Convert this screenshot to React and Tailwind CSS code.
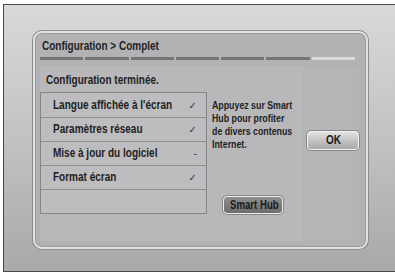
import React from 'react';

const rows = [
  { label: "Langue affichée à l'écran", mark: '✓' },
  { label: 'Paramètres réseau', mark: '✓' },
  { label: 'Mise à jour du logiciel', mark: '-' },
  { label: 'Format écran', mark: '✓' },
  { label: '', mark: '' },
];

const segments = [1, 1, 1, 1, 1, 1, 0];

// condensed look: Liberation Sans squeezed horizontally
function N({ children, center }) {
  return (
    <span
      className={`inline-block whitespace-nowrap scale-x-[0.8] ${center ? 'origin-center' : 'origin-left'}`}
    >
      {children}
    </span>
  );
}

function App() {
  return (
    <div
      className="w-[395px] h-[273px] bg-white pt-[4px] pl-[3px] overflow-hidden text-[#1e1e1e]"
      style={{ fontFamily: '"Liberation Sans", Arial, sans-serif' }}
    >
      <div className="w-[392px] h-[268px] border-t border-l border-b border-[#4a4a4a] bg-gradient-to-b from-[#d9d9d9] via-[#c2c2c2] to-[#a9a9aa] pt-[26px] pl-[29px]">
        {/* Dialog */}
        <div className="w-[335px] h-[218px] rounded-[9px] border-2 border-[#e2e2e2] bg-[#b2b2b4] shadow-[0_0_0_1px_#8d8d8f,inset_0_0_0_1px_#9a9a9c] pl-[5px] pr-[11px] flex flex-col">
          <div className="h-[22px] pt-[6px] pl-[2px] text-[12.5px] font-bold leading-[14px] text-[#222]">
            <N>Configuration &gt; Complet</N>
          </div>

          {/* Step bar */}
          <div className="flex gap-[2px] h-[3px] mt-[2px]">
            {segments.map((s, i) => (
              <div key={i} className={`flex-1 ${s ? 'bg-[#747476]' : 'bg-[#d9d9db]'}`} />
            ))}
          </div>

          <div className="flex mt-[6px] h-[175px]">
            {/* Left area */}
            <div className="w-[262px] bg-[#b8b8ba] flex flex-col">
              <div className="h-[26px] pt-[7px] pl-[6px] text-[12.5px] font-bold leading-[14px] text-[#222]">
                <N>Configuration terminée.</N>
              </div>
              <div className="flex">
                <div className="w-[167px] border border-[#858587] bg-[#bdbdbf]">
                  {rows.map((r, i) => (
                    <div
                      key={i}
                      className={`h-[24px] flex items-center pl-[12px] pr-[9px] text-[12.5px] font-bold ${i > 0 ? 'border-t border-[#8e8e90]' : ''}`}
                    >
                      <span className="flex-1 min-w-0 leading-none">
                        <N>{r.label}</N>
                      </span>
                      <span
                        className="text-[10px] font-normal text-[#3a3a3a]"
                        style={{ fontFamily: '"DejaVu Sans", sans-serif' }}
                      >
                        {r.mark}
                      </span>
                    </div>
                  ))}
                </div>
                <div className="flex-1 flex flex-col pl-[5px] pt-[7px]">
                  <p className="text-[11px] font-bold leading-[13px] text-[#222] whitespace-nowrap origin-left scale-x-[0.8]">
                    Appuyez sur Smart
                    <br />
                    Hub pour profiter
                    <br />
                    de divers contenus
                    <br />
                    Internet.
                  </p>
                  <button className="mt-[45px] ml-[11px] w-[60px] h-[18px] rounded-[4px] border border-[#ececec] bg-gradient-to-b from-[#8e8e90] to-[#6e6e70] text-[12px] font-bold text-[#1a1a1a] leading-none shadow-[0_0_0_1px_#888]">
                    <N center>Smart Hub</N>
                  </button>
                </div>
              </div>
            </div>

            {/* Right column */}
            <div className="flex-1 bg-[#b5b5b7] pt-[61px] pl-[5px]">
              <button className="w-[52px] h-[19px] rounded-[4px] border border-[#f0f0f0] bg-gradient-to-b from-[#e2e2e2] via-[#c4c4c4] to-[#a8a8a8] text-[12.5px] font-bold text-[#1a1a1a] leading-none shadow-[0_0_0_1px_#8a8a8a]">
                <N center>OK</N>
              </button>
            </div>
          </div>
        </div>
      </div>
    </div>
  );
}

export default App;
